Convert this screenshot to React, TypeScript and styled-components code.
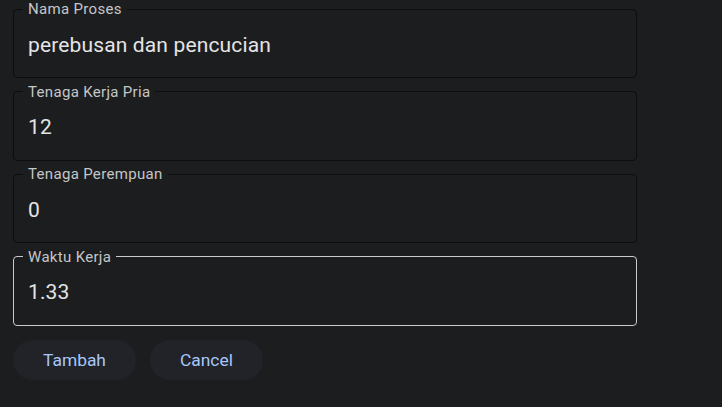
import React from "react";
import styled, { createGlobalStyle } from "styled-components";

const Global = createGlobalStyle`
  html, body { margin: 0; padding: 0; background: #1c1d1f; }
  body { font-family: Roboto, "Noto Sans", Arial, sans-serif; }
`;

const Page = styled.div`
  display: flex;
  flex-direction: column;
  padding: 0 0 0 13px;
  width: 624px;
`;

const Fields = styled.div`
  display: flex;
  flex-direction: column;
  gap: 4.67px;
`;

const Field = styled.fieldset<{ $active?: boolean }>`
  margin: 0;
  padding: 0 9px;
  border: 1px solid ${(p) => (p.$active ? "#c9cacb" : "#0c0d0e")};
  border-radius: 4px;
  min-width: 0;
`;

const Label = styled.legend`
  padding: 0 5px;
  font-size: 15px;
  line-height: 18px;
  color: #c4c6c8;
  letter-spacing: 0.32px;
`;

const Input = styled.input`
  display: block;
  width: 100%;
  box-sizing: border-box;
  background: transparent;
  border: none;
  outline: none;
  padding: 14px 5px 20px;
  height: 59px;
  font-family: Roboto, "Noto Sans", Arial, sans-serif;
  font-size: 21px;
  line-height: 25px;
  letter-spacing: 0.14px;
  color: #e4e4e5;
`;

const Actions = styled.div`
  display: flex;
  gap: 14px;
  margin-top: 14px;
`;

const Button = styled.button`
  height: 40px;
  padding: 0 30px;
  border: none;
  border-radius: 20px;
  background: #212328;
  color: #a8c7fa;
  font-family: Roboto, "Noto Sans", Arial, sans-serif;
  font-size: 17.4px;
  cursor: pointer;
`;

const fields = [
  { label: "Nama Proses", value: "perebusan dan pencucian" },
  { label: "Tenaga Kerja Pria", value: "12" },
  { label: "Tenaga Perempuan", value: "0" },
  { label: "Waktu Kerja", value: "1.33", active: true },
];

export default function App() {
  return (
    <>
      <Global />
      <Page>
        <Fields>
          {fields.map((f) => (
            <Field key={f.label} $active={f.active}>
              <Label>{f.label}</Label>
              <Input defaultValue={f.value} />
            </Field>
          ))}
        </Fields>
        <Actions>
          <Button>Tambah</Button>
          <Button>Cancel</Button>
        </Actions>
      </Page>
    </>
  );
}
